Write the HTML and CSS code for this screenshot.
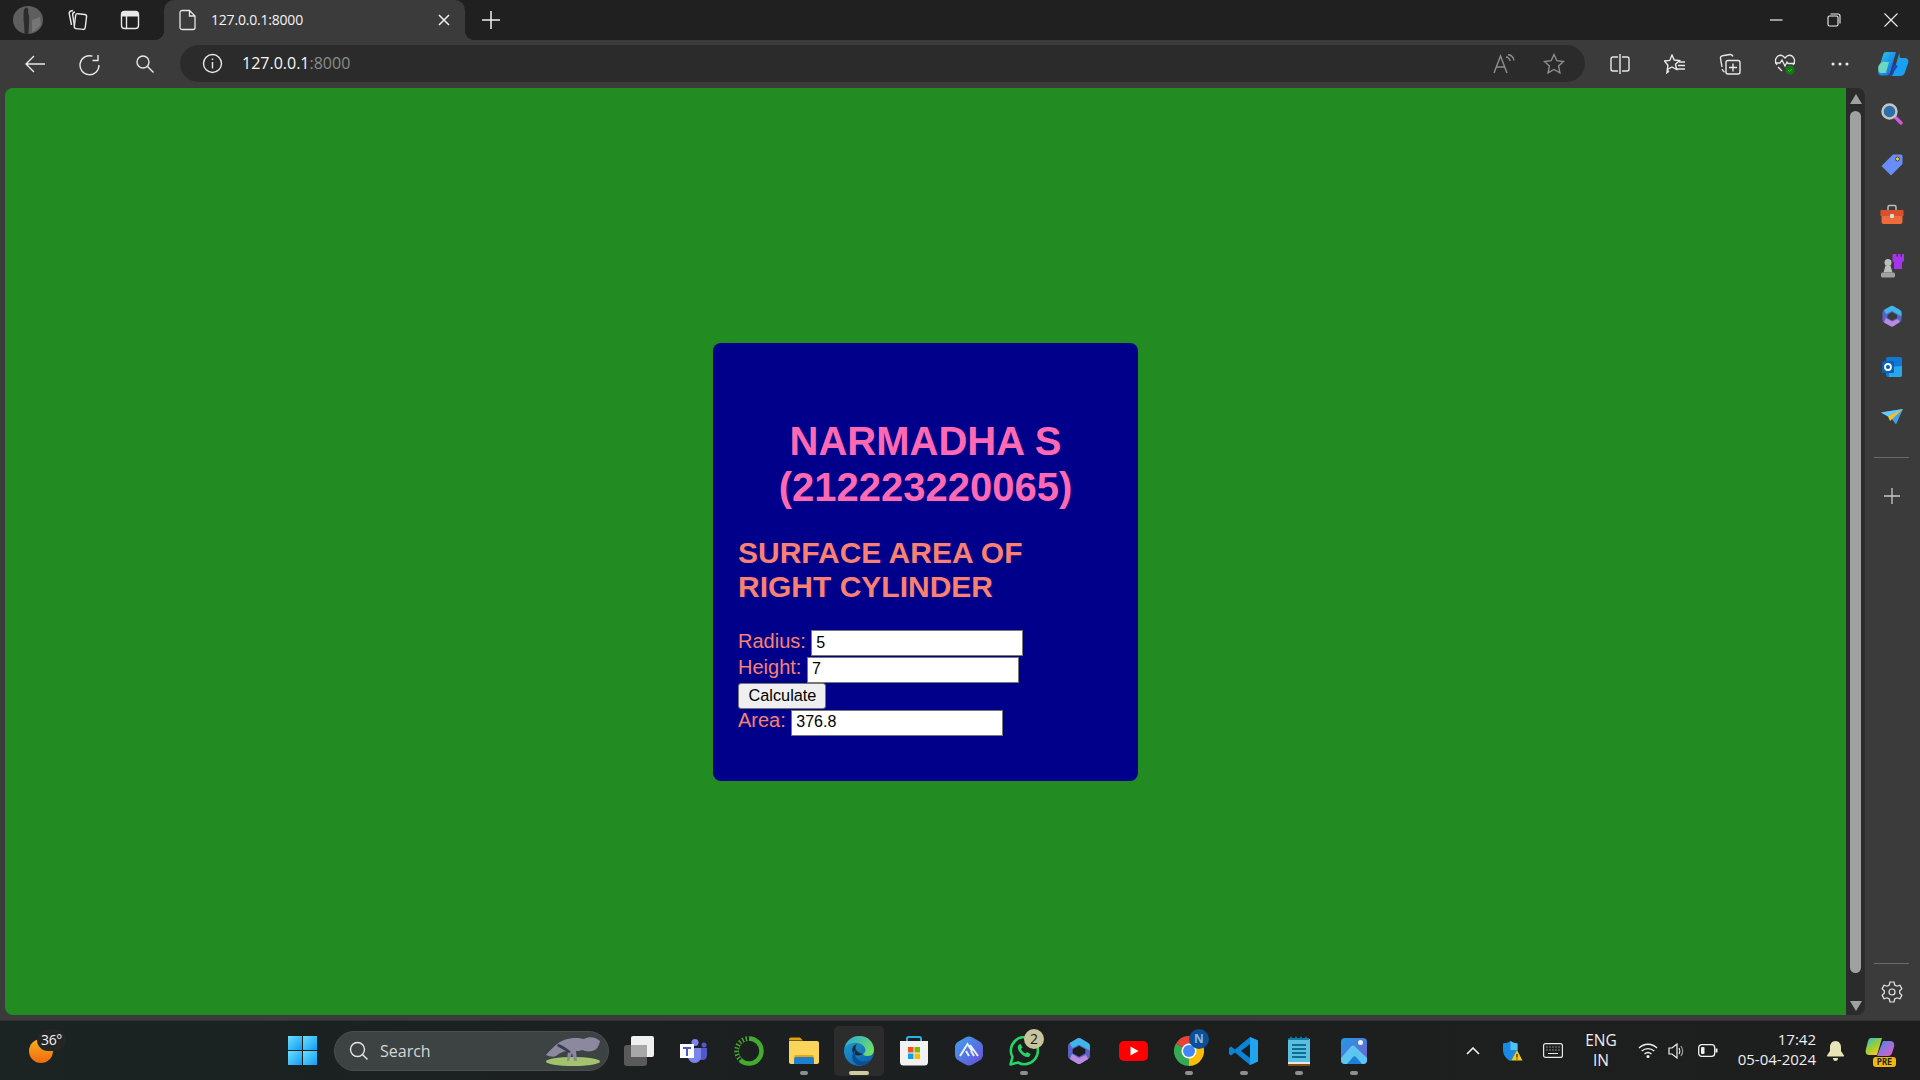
FILE: index.html
```html
<!DOCTYPE html>
<html lang="en">
<head>
<meta charset="utf-8">
<title>127.0.0.1:8000</title>
<link rel="stylesheet" href="styles.css">
</head>
<body>
<svg class="defs" width="0" height="0" aria-hidden="true">
  <defs>
    <linearGradient id="gSun" x1="0" y1="0" x2="0" y2="1"><stop offset="0" stop-color="#fbb11c"/><stop offset="1" stop-color="#f0690f"/></linearGradient>
    <linearGradient id="gWin" x1="0" y1="0" x2="1" y2="1"><stop offset="0" stop-color="#6ce0fb"/><stop offset="1" stop-color="#0f9bf5"/></linearGradient>
    <linearGradient id="gEdge" x1="0" y1="0" x2="1" y2="1"><stop offset="0" stop-color="#1f9fd8"/><stop offset="1" stop-color="#0c59a4"/></linearGradient>
    <linearGradient id="gEdgeTop" x1="0" y1="0" x2="1" y2="0.6"><stop offset="0" stop-color="#2aa6d6"/><stop offset="1" stop-color="#6fdc6a"/></linearGradient>
    <linearGradient id="gArc" x1="0" y1="0" x2="1" y2="1"><stop offset="0" stop-color="#3fa3ef"/><stop offset="1" stop-color="#6a4bd8"/></linearGradient>
    <linearGradient id="gCop" x1="0" y1="0" x2="1" y2="1"><stop offset="0" stop-color="#2fd3d8"/><stop offset="0.55" stop-color="#1a8ff0"/><stop offset="1" stop-color="#1560e0"/></linearGradient>
    <linearGradient id="gPhoto" x1="0" y1="0" x2="1" y2="1"><stop offset="0" stop-color="#1f9be8"/><stop offset="1" stop-color="#7b5cc9"/></linearGradient>
    <linearGradient id="gPre" x1="0" y1="0" x2="0.6" y2="1"><stop offset="0" stop-color="#2fb5ea"/><stop offset="0.5" stop-color="#8ccf3f"/><stop offset="1" stop-color="#f7c51e"/></linearGradient>
    <linearGradient id="gPre2" x1="0" y1="0" x2="1" y2="1"><stop offset="0" stop-color="#3b8bf0"/><stop offset="1" stop-color="#f05ac0"/></linearGradient>
  </defs>
</svg>
<div class="window">
  <header class="tabstrip">
    <div class="slot avatar-slot">
      <svg width="30" height="28" viewBox="0 0 30 28"><ellipse cx="15" cy="14" rx="15" ry="14" fill="#5e5e5e"/><path d="M12 2c3-1 4 2 3 4 2 5 1 12 .5 22h-4c0-8-1-13-1-17 0-3 0-7 1.500-9z" fill="#2c2c2c"/><path d="M19 14l8-3 1 8-6 6-3 1z" fill="#767676"/></svg>
    </div>
    <div class="slot collections">
      <svg width="22" height="22" viewBox="0 0 22 22" class="line"><rect x="9" y="5" width="11" height="15" rx="2" transform="rotate(7 14 12)"/><path d="M9 3c-1.500.3-2.500 1.500-2.300 3l1.700 11M7 1.500L5 2C3.500 2.500 3 3.700 3.300 5l2.200 11"/></svg>
    </div>
    <div class="slot">
      <svg width="20" height="20" viewBox="0 0 20 20" class="line"><rect x="1.500" y="1.500" width="17" height="17" rx="3"/><path d="M6.500 6v12"/><path d="M2 2h16v4.500H2z" fill="#e8e8e8" stroke="none"/></svg>
    </div>
    <div class="tab">
      <svg class="tab-file" width="18" height="22" viewBox="0 0 18 22"><path d="M3 1.500h7.500L16 7v11.500a2 2 0 0 1-2 2H3a2 2 0 0 1-2-2v-15a2 2 0 0 1 2-2zM10.500 1.500V7H16" fill="none" stroke="#e6e6e6" stroke-width="1.300"/></svg>
      <span class="tab-title">127.0.0.1:8000</span>
      <svg class="tab-close" width="12" height="12" viewBox="0 0 12 12"><path d="M1 1l10 10M11 1L1 11" stroke="#f0f0f0" stroke-width="1.500"/></svg>
    </div>
    <div class="slot newtab">
      <svg width="20" height="20" viewBox="0 0 20 20"><path d="M10 1v18M1 10h18" stroke="#f0f0f0" stroke-width="1.500"/></svg>
    </div>
    <div class="winctrls">
      <div class="winbtn"><svg width="14" height="14" viewBox="0 0 14 14"><path d="M1 7h12.500" stroke="#f0f0f0" stroke-width="1.200"/></svg></div>
      <div class="winbtn wide"><svg width="14" height="14" viewBox="0 0 14 14" class="thin"><rect x="1" y="3" width="10" height="10" rx="1.500"/><path d="M3.500 1h7.500a2 2 0 0 1 2 2v7.500"/></svg></div>
      <div class="winbtn"><svg width="14" height="14" viewBox="0 0 14 14"><path d="M.5.500l13 13M13.500.500l-13 13" stroke="#f0f0f0" stroke-width="1.100"/></svg></div>
    </div>
  </header>

  <nav class="toolbar">
    <div class="slot"><svg width="22" height="20" viewBox="0 0 22 20" class="line"><path d="M21 10H2M10 2l-8 8 8 8"/></svg></div>
    <div class="slot gap-s"><svg width="22" height="24" viewBox="0 0 22 24" class="line"><path d="M13.500 3.200A9.500 9.500 0 1 0 20 12M19 2v5.500h-5.500" transform="translate(0 1)"/></svg></div>
    <div class="slot gap-s"><svg width="20" height="20" viewBox="0 0 20 20" class="line"><circle cx="8" cy="8" r="6"/><path d="M12.500 12.500l6 6"/></svg></div>
    <div class="omnibox">
      <div class="slot"><svg width="21" height="21" viewBox="0 0 21 21" class="line"><circle cx="10.500" cy="10.500" r="9"/><path d="M10.500 9v6.500M10.500 5.500v1.500"/></svg></div>
      <div class="url"><span class="url-host">127.0.0.1</span><span class="url-port">:8000</span></div>
      <div class="omni-right">
        <div class="slot omni-slot"><svg width="22" height="20" viewBox="0 0 22 20" class="line dim"><path d="M1 19L7.500 2 14 19M3.500 13h8M13 3c2 0 4 2 4 4M15 .500c3 .500 5.500 3 6 6"/></svg></div>
        <div class="slot omni-slot"><svg width="22" height="22" viewBox="0 0 22 22" class="line dim"><path d="M11 1.500l2.900 6.200 6.600.8-4.900 4.600 1.300 6.700-5.900-3.300-5.900 3.300 1.300-6.700L1.500 8.500l6.600-.8z"/></svg></div>
      </div>
    </div>
    <div class="tools">
      <div class="tool"><svg width="20" height="20" viewBox="0 0 20 20" class="line"><path d="M8 3H3a2 2 0 0 0-2 2v10a2 2 0 0 0 2 2h5M12 3h5a2 2 0 0 1 2 2v10a2 2 0 0 1-2 2h-5M10 0v20"/></svg></div>
      <div class="tool"><svg width="22" height="20" viewBox="0 0 22 20" class="line"><path d="M8 1l2.200 5 5.300.6-4 3.600 1.100 5.300L8 13l-4.600 2.500 1.100 2-1.600 1.200 1-7.500L.5 7l5.300-.6zM15 8h6M14 11.500h7M12.500 15h8.500"/></svg></div>
      <div class="tool"><svg width="22" height="22" viewBox="0 0 22 22" class="line"><path d="M3 14L1.500 5.500C1.300 4 2 3 3.500 2.800L11 1.500c1.500-.2 2.500.5 3 2M5.500 19c-1.300-.5-2-1.500-2.200-3"/><rect x="7" y="7.500" width="14" height="13.500" rx="2"/><path d="M14 10.500v8M10 14.500h8"/></svg></div>
      <div class="tool health"><svg width="22" height="22" viewBox="0 0 22 22"><path d="M3 12C-1 6 4 .500 9 3l2 2 2-2c5-2.500 10 3 6 9M1 10h5l2-3 3 6 2-4 1 1.500h7M4 14l4 4" fill="none" stroke="#e8e8e8" stroke-width="1.300"/><circle cx="16" cy="17" r="4.500" fill="#107c10"/><path d="M14 17l1.500 1.500 2.500-2.500" fill="none" stroke="#54b054" stroke-width="1"/></svg></div>
      <div class="tool"><svg width="20" height="6" viewBox="0 0 20 6"><circle cx="3" cy="3" r="1.500" fill="#eee"/><circle cx="10" cy="3" r="1.500" fill="#eee"/><circle cx="17" cy="3" r="1.500" fill="#eee"/></svg></div>
      <div class="tool copilot"><svg width="32" height="28" viewBox="0 0 32 28"><path d="M9 2h10l-6 21c-.5 1.500-2 2.500-3.500 2.500H5C2 25.500.500 23 1.500 20L6 5c.5-2 1.500-3 3-3z" fill="url(#gCop)"/><path d="M1 17c1-3 3-5 6-5h5l-3 11H4c-2 0-3-3-3-6z" fill="#7fe6b8" opacity=".8"/><path d="M20 2c2 0 3 2 2.500 4L23 8h5c3 0 4 2.500 3 5.500L28 22c-.7 2.500-2 4-5 4H13c2 0 3-1 3.500-3L22 4c.2-.8-.5-2-2-2z" fill="#1aa0f0"/><path d="M16 23c-.5 2-1.500 3-3 3h-2c1.500 0 2.500-1 3-2l3-10 4 2z" fill="#1448c8"/></svg></div>
    </div>
  </nav>

  <div class="content-row">
    <main class="page">
      <section class="card">
        <h1 class="name">NARMADHA S<br>(212223220065)</h1>
        <h2 class="subject">SURFACE AREA OF<br>RIGHT CYLINDER</h2>
        <form class="calc">
          <div class="row"><label for="radius">Radius:</label><input id="radius" type="text" value="5"></div>
          <div class="row"><label for="height">Height:</label><input id="height" type="text" value="7"></div>
          <div class="row"><button type="button">Calculate</button></div>
          <div class="row"><label for="area">Area:</label><input id="area" type="text" value="376.8"></div>
        </form>
      </section>
    </main>
    <div class="scrollbar">
      <div class="arrow-up"></div>
      <div class="thumb"></div>
      <div class="arrow-down"></div>
    </div>
    <aside class="sidebar">
      <div class="side-slot"><svg width="24" height="24" viewBox="0 0 24 24"><path d="M14 14l7 7" stroke="#d05ad8" stroke-width="3.500" stroke-linecap="round"/><circle cx="9.500" cy="9.500" r="7" fill="#2b6ea8" stroke="#c4c4c4" stroke-width="2.500"/></svg></div>
      <div class="side-slot"><svg width="24" height="24" viewBox="0 0 24 24"><path d="M13 1.500h8a1.500 1.500 0 0 1 1.500 1.500v8L11 22.500 1.500 13z" fill="#6a8cf8"/><circle cx="17.500" cy="6" r="2" fill="#f5d020" stroke="#333" stroke-width=".8"/></svg></div>
      <div class="side-slot"><svg width="24" height="22" viewBox="0 0 24 22"><path d="M8 6V3a1.500 1.500 0 0 1 1.500-1.500h5A1.500 1.500 0 0 1 16 3v3" fill="none" stroke="#bdbdbd" stroke-width="1.500"/><path d="M.500 6h23v6H.500z" fill="#d9502c"/><path d="M1.500 12h21v6a2 2 0 0 1-2 2h-17a2 2 0 0 1-2-2z" fill="#ee6a3a"/><rect x="10" y="10" width="4" height="4" rx="1" fill="#d8d8d8"/></svg></div>
      <div class="side-slot"><svg width="24" height="24" viewBox="0 0 24 24"><path d="M14 0h2.500v2.500H18V0h2.500v2.500H22V0h2v7l-2 1.500V15H14V8.500L12.500 7V0z" fill="#a535e8"/><circle cx="8" cy="8.500" r="3.500" fill="#bdbdbd"/><path d="M5.500 11.500h5l2 7H3.500z" fill="#bdbdbd"/><rect x="1" y="18.500" width="14" height="5" rx="1.500" fill="#a0a0a0"/></svg></div>
      <div class="side-slot"><svg width="22" height="24" viewBox="0 0 22 24"><path d="M9.500 2.200a3 3 0 0 1 3 0l6.500 3.800a3 3 0 0 1 1.500 2.600v6.800a3 3 0 0 1-1.500 2.600l-6.500 3.800a3 3 0 0 1-3 0L3 18.600a3 3 0 0 1-1.500-2.600V8.600A3 3 0 0 1 3 6z" fill="#5a62c8"/><path d="M9.500 2.200a3 3 0 0 1 3 0l6.500 3.800a3 3 0 0 1 1.500 2.600v3.900L11 7 5 10 3 6z" fill="#3fb6ea"/><path d="M5 14l6 3.500 6-2.500 2 3-6.500 4.200a3 3 0 0 1-3 0L3 18.600z" fill="#b88ae0"/><path d="M11 8l5 3v3l-5 2.500L6.500 14v-3z" fill="#3b3b3b"/></svg></div>
      <div class="side-slot"><svg width="22" height="22" viewBox="0 0 22 22"><rect x="5" y="1" width="16" height="20" rx="2" fill="#0f78d4"/><path d="M8 11l13-1v9a2 2 0 0 1-2 2H8z" fill="#28a8ea"/><rect x="1" y="5" width="12" height="12" rx="1.500" fill="#0a5fb4"/><circle cx="7" cy="11" r="3" fill="none" stroke="#fff" stroke-width="1.800"/></svg></div>
      <div class="side-slot"><svg width="22" height="16" viewBox="0 0 22 16"><path d="M0 3.500L22 0 15 15.500 10 9z" fill="#3ca0ea"/><path d="M0 3.500L22 0 7 7.500z" fill="#6cc8f5"/><path d="M7 7.500L22 0 9 12z" fill="#f6c22c"/></svg></div>
      <div class="side-rule"></div>
      <div class="side-plus"><svg width="16" height="16" viewBox="0 0 16 16"><path d="M8 0v16M0 8h16" stroke="#c8c8c8" stroke-width="1.300"/></svg></div>
      <div class="side-rule bottom"></div>
      <div class="side-gear"><svg width="22" height="22" viewBox="0 0 22 22"><path d="M9 1h4l.7 3 2.200 1.200 3-.9 2 3.400-2.200 2.100v2.400l2.200 2.100-2 3.400-3-.9-2.200 1.200-.7 3H9l-.7-3-2.200-1.200-3 .9-2-3.400 2.200-2.100V9.800L1.100 7.700l2-3.400 3 .9L8.300 4z" fill="none" stroke="#e8e8e8" stroke-width="1.200"/><circle cx="11" cy="11" r="3" fill="none" stroke="#e8e8e8" stroke-width="1.200"/></svg></div>
    </aside>
  </div>

  <footer class="taskbar">
    <div class="weather">
      <svg width="24" height="24" viewBox="0 0 24 24"><circle cx="12" cy="12" r="12" fill="url(#gSun)"/></svg>
      <span class="temp">36°</span>
    </div>
    <div class="task-start"><svg width="29" height="29" viewBox="0 0 29 29"><rect width="14" height="14" fill="url(#gWin)"/><rect x="15" width="14" height="14" fill="url(#gWin)"/><rect y="15" width="14" height="14" fill="url(#gWin)"/><rect x="15" y="15" width="14" height="14" fill="url(#gWin)"/></svg></div>
    <div class="search">
      <svg width="20" height="20" viewBox="0 0 20 20" class="line"><circle cx="8.500" cy="8.500" r="7"/><path d="M13.500 13.500l5 5"/></svg>
      <span class="search-text">Search</span>
      <svg class="anteater" width="56" height="32" viewBox="0 0 56 32"><ellipse cx="28" cy="26.500" rx="27" ry="4.500" fill="#a3c26e"/><path d="M1 20C8 12 14 6 22 4c5-1.500 12-1.500 17 0 5-3 12-2 16 2-1 5-3 9-8 10-4 1-7 0-10-1-2 1-4 1-6 1l1 10h-3l-2-8-3 8h-2l1-10c-4 0-9 2-12 5-2 1-6 1-10-1z" fill="#8b889f"/><path d="M13 9c4 1 9 4 13 8l-2 1c-4-3-9-5-12-7z" fill="#3a3a4a"/></svg>
    </div>
    <div class="apps">
      <div class="app"><svg width="30" height="30" viewBox="0 0 30 30"><rect x="0" y="9" width="23" height="21" rx="3" fill="#5a5a5a"/><rect x="7" y="0" width="23" height="21" rx="2" fill="#f0f0f0"/><rect x="7" y="9" width="16" height="12" fill="#a8a8a8"/></svg></div>
      <div class="app"><svg width="28" height="24" viewBox="0 0 28 24"><circle cx="15" cy="3.500" r="3.500" fill="#7b83eb"/><circle cx="24" cy="6" r="2.500" fill="#5059c9"/><path d="M20 9h7v7c0 3-2 5-4 5h-3z" fill="#5059c9"/><path d="M8 9h13v9c0 3-3 6-6 6s-6-2-7-5z" fill="#7b83eb"/><rect x="0" y="5" width="14" height="14" fill="#fff"/><path d="M3 8h8v2H8v7H6v-7H3z" fill="#5059c9"/></svg></div>
      <div class="app"><svg width="30" height="30" viewBox="0 0 30 30"><circle cx="15" cy="15" r="12.500" fill="none" stroke="#43ac2f" stroke-width="4.500"/><path d="M15 2.500A12.500 12.500 0 0 0 6 24" fill="none" stroke="#1c1c1c" stroke-width="4.500" stroke-dasharray="2 1.500"/></svg></div>
      <div class="app running"><svg width="30" height="27" viewBox="0 0 30 27"><path d="M0 2.500A2 2 0 0 1 2 .500h9l3 3H0z" fill="#e0a010"/><path d="M0 4h28a2 2 0 0 1 2 2v19a2 2 0 0 1-2 2H2a2 2 0 0 1-2-2z" fill="#fbd45a"/><path d="M5 27v-7a2 2 0 0 1 2-2h16a2 2 0 0 1 2 2v7z" fill="#e8a80c"/><path d="M5 27v-5a2 2 0 0 1 2-2h16a2 2 0 0 1 2 2v5z" fill="#1f7fd0"/></svg></div>
      <div class="app active"><svg width="30" height="30" viewBox="0 0 30 30"><circle cx="15" cy="15" r="15" fill="url(#gEdge)"/><path d="M1 11C3 4 9 0 15 0c9 0 15 6 15 14 0 3-2 6-6 6-3 0-5-1-5-2 2-1 3-3 2-6-2-4-7-6-11-5-4 0-7 2-9 4z" fill="url(#gEdgeTop)"/><path d="M19 18c-3 2-8 2-10-1-2-4 0-8 4-9-4 5 1 9 6 10z" fill="#1c1c1c" opacity=".85"/><path d="M14 29c3 1 9 0 13-5-4 2-9 2-12 0-4-2-5-7-3-11-4 3-5 9-2 13 1 1 2 2 4 3z" fill="#0b4f96"/></svg></div>
      <div class="app"><svg width="30" height="30" viewBox="0 0 30 30"><path d="M8 6V2.500c0-1 .5-1.500 1.500-1.500h11c1 0 1.500.5 1.500 1.500V6" fill="none" stroke="#2ab0ea" stroke-width="2"/><path d="M1 5h28v21a3.500 3.500 0 0 1-3.500 3.500h-21A3.500 3.500 0 0 1 1 26z" fill="#f2f2f2"/><rect x="9" y="11" width="5.500" height="5.500" fill="#f25022"/><rect x="15.500" y="11" width="5.500" height="5.500" fill="#7fba00"/><rect x="9" y="17.500" width="5.500" height="5.500" fill="#00a4ef"/><rect x="15.500" y="17.500" width="5.500" height="5.500" fill="#ffb900"/></svg></div>
      <div class="app"><svg width="28" height="30" viewBox="0 0 28 30"><path d="M10.500 1.500a7 7 0 0 1 7 0l7 4a7 7 0 0 1 3.500 6v7a7 7 0 0 1-3.500 6l-7 4a7 7 0 0 1-7 0l-7-4A7 7 0 0 1 0 18.500v-7a7 7 0 0 1 3.500-6z" fill="url(#gArc)"/><path d="M5 20L12.500 8 17 15M14 20l-3-5M15 9l8 11M19 20l-3-5" fill="none" stroke="#e8f0ff" stroke-width="2"/></svg></div>
      <div class="app running"><svg width="30" height="30" viewBox="0 0 30 30"><path d="M1.500 28.500l2-7.500A13.500 13.500 0 1 1 9 26.500z" fill="none" stroke="#25d366" stroke-width="2.600" stroke-linejoin="round"/><path d="M10 8.500c-2 2-1.500 5 1.500 8.500s6.500 5 9 3.500l1-2.500-3.500-2-1.500 1.500c-2-1-3.500-2.500-4.500-4.500l1.500-1.500-2-3.500z" fill="#25d366"/></svg><span class="badge badge-count">2</span></div>
      <div class="app"><svg width="26" height="30" viewBox="0 0 22 26"><path d="M9.500 2.200a3 3 0 0 1 3 0l6.500 3.800a3 3 0 0 1 1.500 2.600v8.800a3 3 0 0 1-1.500 2.600l-6.500 3.800a3 3 0 0 1-3 0L3 20a3 3 0 0 1-1.500-2.600V8.600A3 3 0 0 1 3 6z" fill="#5a62c8"/><path d="M9.500 2.200a3 3 0 0 1 3 0l6.500 3.800a3 3 0 0 1 1.500 2.600v4L11 7.500 5 10.500 3 6z" fill="#3fb6ea"/><path d="M5 15.500l6 3.500 6-2.500 2 3.500-6.500 3.800a3 3 0 0 1-3 0L3 20z" fill="#b88ae0"/><path d="M11 8.500l5.500 3v3.500L11 18l-5.500-3v-3.500z" fill="#1c1c1c"/></svg></div>
      <div class="app"><svg width="29" height="20" viewBox="0 0 29 20"><rect width="29" height="20" rx="5" fill="#f00"/><path d="M11.500 5.500l8 4.500-8 4.500z" fill="#fff"/></svg></div>
      <div class="app running"><svg width="30" height="30" viewBox="0 0 30 30"><path d="M15 15L2 7.500A15 15 0 0 1 28 7.500z" fill="#ea4335"/><path d="M15 15l13-7.500A15 15 0 0 1 15 30z" fill="#fbbc04"/><path d="M15 15v15A15 15 0 0 1 2 7.500z" fill="#34a853"/><circle cx="15" cy="15" r="7.500" fill="#fff"/><circle cx="15" cy="15" r="6" fill="#4285f4"/></svg><span class="badge badge-profile">N</span></div>
      <div class="app running"><svg width="30" height="30" viewBox="0 0 30 30"><path d="M21 1l8 3.500v21L21 29 6 16.500l-4 3L0 18v-6l2-1.500 4 3zM21 8l-9 7 9 7z" fill="#0a84d8"/><path d="M21 1l8 3.500v21L21 29z" fill="#20a5f0"/></svg></div>
      <div class="app running"><svg width="22" height="30" viewBox="0 0 22 30"><path d="M0 3h22v24H0z" fill="#5bbfe0"/><path d="M0 27h22v3H0z" fill="#8a4a18"/><path d="M0 26h22v2H0z" fill="#e8e8e8"/><path d="M0 3a1 1 0 0 1 1-1h1l1-2 1 2h3l1-2 1 2h3l1-2 1 2h3l1-2 1 2h2v2H0z" fill="#0f7fa8"/><path d="M4 9h14M4 13h14M4 17h14M4 21h14" stroke="#0f6d96" stroke-width="2"/></svg></div>
      <div class="app running"><svg width="26" height="26" viewBox="0 0 26 26"><rect width="26" height="26" rx="4" fill="url(#gPhoto)"/><circle cx="19.500" cy="4.500" r="2.500" fill="#e8f0ff"/><path d="M0 20L10 8.500a3 3 0 0 1 4 0L26 20v2a4 4 0 0 1-4 4H4a4 4 0 0 1-4-4z" fill="#5ec4f0"/><path d="M6 26l6-7a2 2 0 0 1 3 0l6 7z" fill="#1a80d8"/></svg></div>
    </div>
    <div class="tray">
      <div class="tray-slot s40"><svg width="14" height="8" viewBox="0 0 14 8"><path d="M1 7l6-6 6 6" fill="none" stroke="#f2f2f2" stroke-width="1.600"/></svg></div>
      <div class="tray-slot s40"><svg width="20" height="20" viewBox="0 0 20 20"><path d="M7.500 0c2 1.500 4 2 7 2.500V9c0 5-3 9-7 11-4-2-7.500-6-7.500-11V2.500C3 2 5.500 1.500 7.500 0z" fill="#1a8ae0"/><path d="M7.500 0c2 1.500 4 2 7 2.500V9H7.500z" fill="#52c0f0"/><path d="M14 9l5.500 10.500h-11z" fill="#f7c81a"/><path d="M14 13v3.500M14 17.500v1" stroke="#222" stroke-width="1.200"/></svg></div>
      <div class="tray-slot s40"><svg width="20" height="15" viewBox="0 0 20 15"><rect x=".6" y=".6" width="18.800" height="13.800" rx="2" fill="none" stroke="#e8e8e8" stroke-width="1.200"/><path d="M3.500 4h1M6.500 4h1M9.500 4h1M12.500 4h1M15.500 4h1M3.500 7h1M6.500 7h1M9.500 7h1M12.500 7h1M15.500 7h1M5 10.500h10" stroke="#e8e8e8" stroke-width="1.200"/></svg></div>
      <div class="lang"><span>ENG</span><span>IN</span></div>
      <div class="tray-slot s30"><svg width="20" height="15" viewBox="0 0 20 15"><path d="M1 5c5-5 13-5 18 0M3.700 8c3.500-3.300 9-3.300 12.600 0M6.500 11c2-1.700 5-1.700 7 0" fill="none" stroke="#f0f0f0" stroke-width="1.300"/><circle cx="10" cy="13.500" r="1.500" fill="#f0f0f0"/></svg></div>
      <div class="tray-slot s28"><svg width="18" height="16" viewBox="0 0 18 16"><path d="M1 5h3l5-4v14l-5-4H1z" fill="none" stroke="#f0f0f0" stroke-width="1.200"/><path d="M11 5c1 1.500 1 4.500 0 6" fill="none" stroke="#f0f0f0" stroke-width="1.200"/><path d="M13 3c2 3 2 7 0 10" fill="none" stroke="#a0a0a0" stroke-width="1.200"/></svg></div>
      <div class="tray-slot s34"><svg width="20" height="13" viewBox="0 0 20 13"><rect x=".7" y=".7" width="16" height="11.600" rx="3" fill="none" stroke="#f0f0f0" stroke-width="1.300"/><rect x="3" y="3" width="3.500" height="7" rx="1" fill="#f0f0f0"/><path d="M18.500 4.500v4" stroke="#f0f0f0" stroke-width="2"/></svg></div>
      <div class="clock"><span>17:42</span><span>05-04-2024</span></div>
      <div class="tray-slot s38"><svg width="17" height="20" viewBox="0 0 17 20"><path d="M8.500 0C5 0 3 3 3 6v4l-3 4.500c0 .5 0 1 1 1h15c1 0 1-.5 1-1L14 10V6c0-3-2-6-5.500-6z" fill="#e8e4b8"/><path d="M6 17h5c0 2-1 3-2.500 3S6 19 6 17z" fill="#e8e4b8"/></svg></div>
      <div class="tray-slot s52 copre"><svg width="30" height="20" viewBox="0 0 30 20"><path d="M6 0h11L12 17H4c-3 0-4-3-3-6L3 3c.5-2 1.500-3 3-3z" fill="url(#gPre)"/><path d="M18 3h7c3 0 5 2 4 6l-2 6c-.5 2-2 3-4 3H12z" fill="url(#gPre2)"/></svg><span class="pre">PRE</span></div>
    </div>
  </footer>
</div>
</body>
</html>
```
FILE: styles.css
```css
* { box-sizing: border-box; }
html, body { margin: 0; height: 100%; overflow: hidden; }
body { background: #3b3b3b; font-family: "Open Sans", "Noto Sans", sans-serif; color: #f2f2f2; }
.defs { position: absolute; }
svg { display: block; flex: none; }
.line { fill: none; stroke: #e8e8e8; stroke-width: 1.400; }
.line.dim { stroke: #8f8f8f; }
.thin { fill: none; stroke: #f0f0f0; stroke-width: 1.100; }

.window { display: flex; flex-direction: column; height: 1080px; }
.slot { width: 44px; height: 100%; display: flex; align-items: center; justify-content: center; flex: none; }

/* Tab strip */
.tabstrip { height: 40px; flex: none; background: #202020; display: flex; padding-left: 6px; }
.tabstrip .slot + .slot { margin-left: 6px; }
.tabstrip .slot:nth-child(3) { margin-left: 8px; }
.tabstrip .collections { padding-right: 2px; }
.tab { position: relative; width: 301px; margin-left: 12px; background: #3b3b3b; border-radius: 10px 10px 0 0; display: flex; align-items: center; padding-left: 15px; }
.tab::before, .tab::after { content: ""; position: absolute; bottom: 0; width: 10px; height: 10px; }
.tab::before { left: -10px; background: radial-gradient(circle at 0 0, transparent 10px, #3b3b3b 10.500px); }
.tab::after { right: -10px; background: radial-gradient(circle at 100% 0, transparent 10px, #3b3b3b 10.500px); }
.tab-title { font-size: 14px; margin-left: 14px; letter-spacing: -.2px; color: #f4f4f4; white-space: nowrap; padding-bottom: 1px; }
.tab-close { margin-left: auto; margin-right: 15px; }
.tabstrip .newtab { margin-left: 4px; }
.winctrls { margin-left: auto; display: flex; padding-right: 1px; }
.winbtn { width: 56px; display: flex; align-items: center; justify-content: center; }
.winbtn.wide { width: 59px; }

/* Toolbar */
.toolbar { height: 48px; flex: none; background: #3b3b3b; display: flex; padding-left: 13px; align-items: stretch; }
.gap-s { margin-left: 11px; }
.omnibox { width: 1405px; height: 37px; margin: 5px 0 0 13px; background: #2b2b2b; border-radius: 19px; display: flex; align-items: center; padding-left: 10px; flex: none; }
.url { margin-left: 8px; font-size: 16px; letter-spacing: 0; white-space: nowrap; padding-bottom: 2px; }
.url-host { color: #f6f6f6; }
.url-port { color: #8b8b8b; }
.omni-right { margin-left: auto; display: flex; padding-right: 6px; height: 100%; }
.omni-slot { width: 50px; }
.tools { display: flex; margin-left: 7px; }
.tool { width: 55px; display: flex; align-items: center; justify-content: center; padding-bottom: 1px; }
.tool.copilot { width: 54px; padding-right: 3px; }
.tool.health { padding-top: 1px; }

/* Page */
.content-row { flex: 1; min-height: 0; display: flex; padding: 0 0 5px 5px; }
.page { flex: 1; background: #228b22; border-radius: 8px 0 0 8px; display: flex; align-items: center; justify-content: center; padding-top: 21px; font-family: "Liberation Sans", Arial, sans-serif; }
.card { width: 425px; height: 438px; background: #00008b; border-radius: 8px; padding: 75px 25px 0; color: #fa8072; }
.name { margin: 0 0 26px; font-size: 40px; line-height: 46px; font-weight: 700; text-align: center; color: #ff69b4; }
.subject { margin: 0 0 26px; font-size: 30px; line-height: 34px; font-weight: 700; color: #fa8072; }
.calc { display: flex; flex-direction: column; }
.row { display: flex; align-items: center; gap: 5.500px; height: 26.500px; font-size: 20px; }
.row label { line-height: 23px; position: relative; top: -2px; }
.row input { width: 212px; height: 26px; font: 16px "Liberation Sans", Arial, sans-serif; padding: 0 4px 1px; border: 1px solid #767676; background: #fff; color: #000; border-radius: 0; outline: none; }
.row button { width: 88px; height: 26px; padding: 0 0 2px 1px; font: 16.300px "Liberation Sans", Arial, sans-serif; color: #000; background: #efefef; border: 1px solid #767676; border-radius: 3px; }

/* Scrollbar + sidebar */
.scrollbar { width: 19px; flex: none; background: #2b2b2b; border-radius: 0 8px 8px 0; display: flex; flex-direction: column; align-items: center; padding: 6px 0 4px; }
.arrow-up, .arrow-down { width: 0; height: 0; border-left: 6.500px solid transparent; border-right: 6.500px solid transparent; flex: none; }
.arrow-up { border-bottom: 10px solid #a0a0a0; }
.arrow-down { border-top: 10px solid #a0a0a0; }
.thumb { width: 11px; flex: 1; background: #a0a0a0; border-radius: 6px; margin: 7px 0 28px; }
.sidebar { width: 55px; flex: none; display: flex; flex-direction: column; align-items: center; padding: 1px 2px 0 0; }
.side-slot { height: 50.500px; width: 100%; display: flex; align-items: center; justify-content: center; flex: none; }
.side-rule { width: 35px; height: 1px; background: #6a6a6a; margin-top: 14px; flex: none; }
.side-rule.bottom { margin-top: auto; }
.side-plus { margin-top: 30px; }
.side-gear { margin: 17px 0 12px; }

/* Taskbar */
.taskbar { height: 60px; flex: none; display: flex; align-items: center; background: linear-gradient(90deg, #1b2323, #1c1f1f 40%, #1e1e1e); border-top: 1px solid #333; }
.weather { position: relative; width: 280px; padding-left: 29px; flex: none; }
.temp { position: absolute; left: 37px; top: -10px; width: 29px; height: 22px; background: #252525; border-radius: 11px; font-size: 14px; line-height: 21px; text-align: center; letter-spacing: -.4px; color: #f4f4f4; }
.task-start { width: 44px; display: flex; justify-content: center; flex: none; }
.search { width: 275px; height: 40px; margin-left: 10px; background: #3d4342; border-radius: 20px; display: flex; align-items: center; padding-left: 14px; position: relative; flex: none; border: 1px solid #4a4f4e; }
.search-text { margin-left: 11px; font-size: 16px; color: #d6d6d6; }
.anteater { margin-left: auto; margin-right: 7px; }
.apps { display: flex; margin-left: 2px; }
.app { width: 55px; height: 50px; display: flex; align-items: center; justify-content: center; position: relative; flex: none; }
.app.running::after, .app.active::after { content: ""; position: absolute; bottom: 1px; left: 50%; height: 4px; border-radius: 2px; transform: translateX(-50%); }
.app.running::after { width: 8px; background: #8f8f8f; }
.app.active { background: #2c2c2c; border-radius: 5px; width: 50px; margin: 0 2.500px; }
.app.active::after { width: 20px; background: #cfcaa0; }
.badge { position: absolute; border-radius: 50%; width: 20px; height: 20px; line-height: 20px; text-align: center; }
.badge-count { right: 7px; top: 3px; background: #c8c49c; color: #1a1a1a; font-size: 14px; }
.badge-profile { right: 7px; top: 3px; background: #0b4f96; color: #8fb4dc; font-weight: 700; font-size: 12px; }
.tray { margin-left: auto; display: flex; align-items: center; height: 100%; padding-right: 14px; }
.tray-slot { display: flex; align-items: center; justify-content: center; position: relative; height: 100%; flex: none; }
.s40 { width: 40px; } .s30 { width: 30px; } .s28 { width: 28px; } .s34 { width: 34px; } .s38 { width: 38px; } .s52 { width: 52px; }
.lang { width: 56px; margin-right: 4px; display: flex; flex-direction: column; align-items: center; font-size: 15.500px; line-height: 20px; color: #eee; flex: none; padding-bottom: 2px; }
.clock { width: 91px; display: flex; flex-direction: column; align-items: flex-end; font-size: 15px; line-height: 20px; color: #eee; flex: none; white-space: nowrap; padding-bottom: 4px; }
.copre svg { margin-bottom: 6px; }
.pre { position: absolute; left: 19px; top: 36px; width: 23px; height: 10px; background: #f2b80e; border-radius: 3px; font: 700 8.500px/10px "DejaVu Sans Mono", monospace; text-align: center; color: #222; }
```
